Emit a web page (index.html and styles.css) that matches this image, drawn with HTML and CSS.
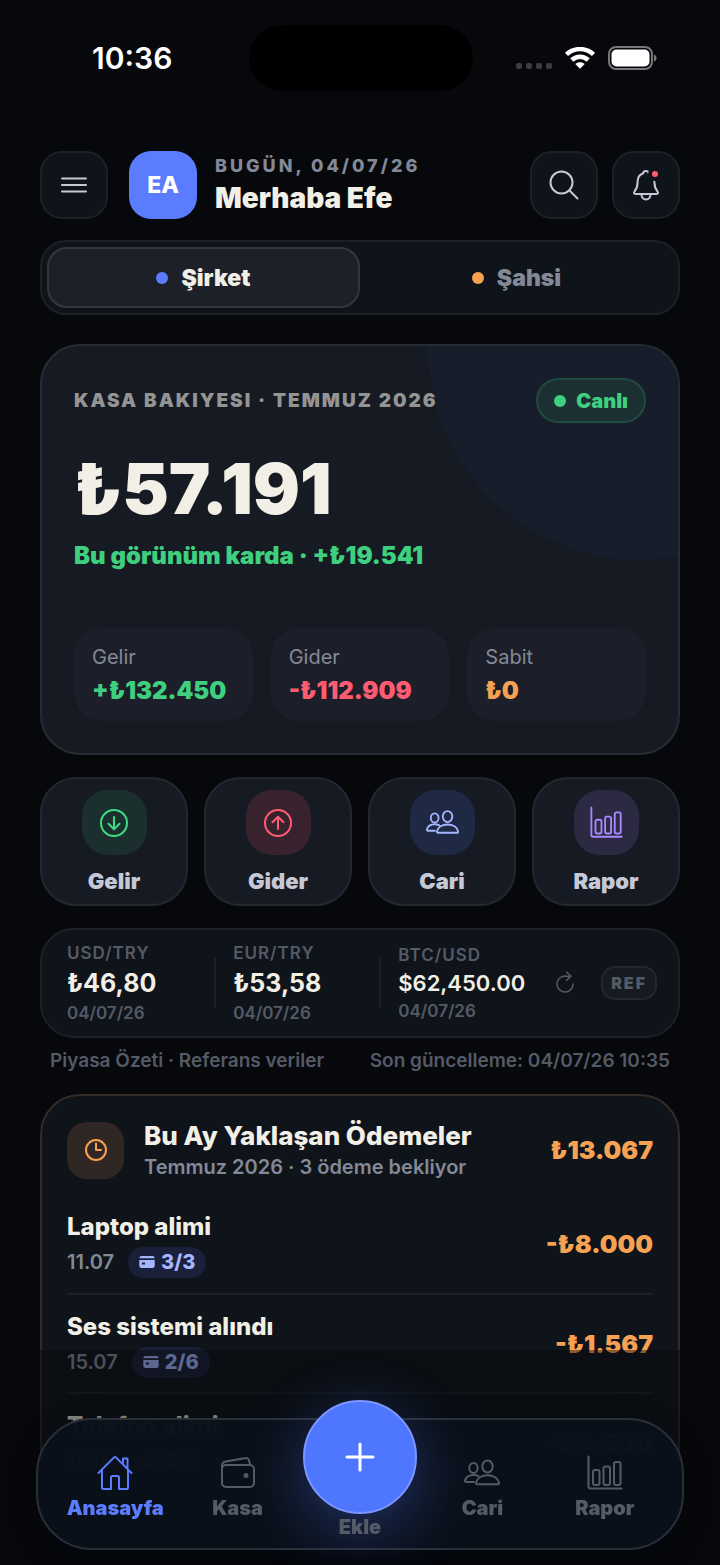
FILE: index.html
```html
<!DOCTYPE html>
<html lang="tr">
<head>
  <meta charset="UTF-8">
  <meta name="viewport" content="width=device-width, initial-scale=1.0">
  <title>Anasayfa</title>
  <link rel="stylesheet" href="styles.css">
</head>
<body>
  <!-- İkonlar -->
  <svg class="sprite" aria-hidden="true">
    <symbol id="icon-people" viewBox="0 0 36 36">
      <ellipse cx="23.500" cy="11.500" rx="5.200" ry="6"/>
      <path d="M13 29.200c-.8 0-1.200-.6-1-1.500 1-4.600 5.700-7.500 11.500-7.500S34 23.100 35 27.700c.2.9-.2 1.500-1 1.500z"/>
      <ellipse cx="9.500" cy="13" rx="4.200" ry="5"/>
      <path d="M9.800 27H2c-.7 0-1.100-.5-1-1.300.8-3.500 4.200-5.800 8.500-5.800 1.900 0 3.600.4 5 1.200"/>
    </symbol>
    <symbol id="icon-chart" viewBox="0 0 36 36">
      <path d="M1.500 1.500v30c0 1.600.4 2 2 2h31"/>
      <rect x="6" y="15" width="6.500" height="15" rx="2"/>
      <rect x="16.500" y="11.500" width="6.500" height="18.500" rx="2"/>
      <rect x="27" y="7" width="6.500" height="23" rx="2"/>
    </symbol>
    <symbol id="icon-card" viewBox="0 0 16 14">
      <path d="M2.500 1h11A2.200 2.200 0 0 1 15.700 3.200H.3A2.200 2.200 0 0 1 2.500 1z"/>
      <path fill-rule="evenodd" d="M.3 5h15.400v5.800a2.200 2.200 0 0 1-2.200 2.200h-11A2.200 2.200 0 0 1 .3 10.800zM3 7.500v2h3v-2z"/>
    </symbol>
  </svg>

  <div class="status-bar">
    <span class="status-time">10:36</span>
    <span class="island"></span>
    <span class="status-icons">
      <span class="signal"><i></i><i></i><i></i><i></i></span>
      <svg class="wifi" width="30" height="22" viewBox="0 0 30 22">
        <path d="M1.500 7.500C9 .3 21 .3 28.500 7.500"/>
        <path d="M6.800 13c4.700-4.400 11.700-4.400 16.400 0"/>
        <path class="solid" d="M15 21.800l-4.700-4.900c2.600-2.300 6.800-2.300 9.400 0z"/>
      </svg>
      <svg class="battery" width="50" height="24" viewBox="0 0 50 24">
        <rect class="shell" x="1" y="1" width="43" height="22" rx="7"/>
        <rect class="charge" x="3.500" y="3.500" width="38" height="17" rx="5"/>
        <path class="tip" d="M46 8.500c3.400 1 3.400 6 0 7z"/>
      </svg>
    </span>
  </div>

  <main class="page">
    <header class="header">
      <button class="icon-btn" type="button" aria-label="Menü">
        <svg width="28" height="28" viewBox="0 0 28 28"><path d="M2 7.500h24M2 14h24M2 20.500h24"/></svg>
      </button>
      <div class="avatar">EA</div>
      <div class="greeting">
        <p>BUGÜN, 04/07/26</p>
        <h1>Merhaba Efe</h1>
      </div>
      <button class="icon-btn" type="button" aria-label="Ara">
        <svg width="32" height="32" viewBox="0 0 32 32"><circle cx="13.500" cy="13.500" r="11"/><path d="M21.500 21.500l8 8"/></svg>
      </button>
      <button class="icon-btn" type="button" aria-label="Bildirimler">
        <svg width="32" height="32" viewBox="0 0 32 32">
          <path d="M5.500 25C4 25 3.500 23.800 4.500 22.500c2.300-2.800 3-4.500 3-8.500 0-5 1.500-8.500 5.500-9.500.4-1.800 1.500-2.500 3-2.500s2.600.7 3 2.500c4 1 5.500 4.500 5.500 9.500 0 4 .7 5.700 3 8.500 1 1.300.5 2.500-1 2.500z"/>
          <path d="M11.500 25.500c0 3 2 5 4.500 5s4.500-2 4.500-5"/>
        </svg>
        <span class="notify-dot"></span>
      </button>
    </header>

    <div class="switch">
      <button class="switch-item active" type="button"><span class="dot blue"></span>Şirket</button>
      <button class="switch-item" type="button"><span class="dot orange"></span>Şahsi</button>
    </div>

    <section class="balance">
      <div class="balance-head">
        <h2>KASA BAKIYESI · TEMMUZ 2026</h2>
        <span class="live"><span class="dot green"></span>Canlı</span>
      </div>
      <p class="balance-amount">₺57.191</p>
      <p class="balance-note">Bu görünüm karda · +₺19.541</p>
      <div class="stats">
        <div class="stat"><span>Gelir</span><strong class="text-green">+₺132.450</strong></div>
        <div class="stat"><span>Gider</span><strong class="text-red">-₺112.909</strong></div>
        <div class="stat"><span>Sabit</span><strong class="text-orange">₺0</strong></div>
      </div>
    </section>

    <div class="actions">
      <button class="action" type="button">
        <span class="action-icon green"><svg width="30" height="30" viewBox="0 0 30 30"><circle cx="15" cy="15" r="13"/><path d="M15 9v12M9.500 15.800l5.500 5.400 5.500-5.400"/></svg></span>
        Gelir
      </button>
      <button class="action" type="button">
        <span class="action-icon red"><svg width="30" height="30" viewBox="0 0 30 30"><circle cx="15" cy="15" r="13"/><path d="M15 21V9M9.500 14.200L15 8.800l5.500 5.400"/></svg></span>
        Gider
      </button>
      <button class="action" type="button">
        <span class="action-icon blue"><svg width="33" height="33"><use href="#icon-people"/></svg></span>
        Cari
      </button>
      <button class="action" type="button">
        <span class="action-icon purple"><svg width="33" height="33"><use href="#icon-chart"/></svg></span>
        Rapor
      </button>
    </div>

    <section class="market">
      <div class="quote"><span>USD/TRY</span><strong>₺46,80</strong><small>04/07/26</small></div>
      <div class="quote"><span>EUR/TRY</span><strong>₺53,58</strong><small>04/07/26</small></div>
      <div class="quote quote-btc"><span>BTC/USD</span><strong>$62,450.00</strong><small>04/07/26</small></div>
      <button class="refresh" type="button" aria-label="Yenile">
        <svg width="22" height="26" viewBox="0 0 22 26"><path d="M14.500 6.800A8 8 0 1 0 19 14M11 6.300h5.500M12.500 2l4.300 4.300L12.500 10.500"/></svg>
      </button>
      <span class="ref">REF</span>
    </section>
    <div class="market-note">
      <span>Piyasa Özeti · Referans veriler</span>
      <span>Son güncelleme: 04/07/26 10:35</span>
    </div>

    <section class="payments">
      <div class="payments-head">
        <span class="clock"><svg width="24" height="24" viewBox="0 0 24 24"><circle cx="12" cy="12" r="10"/><path d="M12 5.500V12h5"/></svg></span>
        <div class="payments-title">
          <h2>Bu Ay Yaklaşan Ödemeler</h2>
          <p>Temmuz 2026 · 3 ödeme bekliyor</p>
        </div>
        <strong class="amount">₺13.067</strong>
      </div>
      <ul class="payment-list">
        <li>
          <div>
            <h3>Laptop alimi</h3>
            <p>11.07 <span class="part"><svg width="16" height="14"><use href="#icon-card"/></svg>3/3</span></p>
          </div>
          <strong class="amount">-₺8.000</strong>
        </li>
        <li>
          <div>
            <h3>Ses sistemi alındı</h3>
            <p>15.07 <span class="part"><svg width="16" height="14"><use href="#icon-card"/></svg>2/6</span></p>
          </div>
          <strong class="amount">-₺1.567</strong>
        </li>
        <li>
          <div>
            <h3>Telefon alimi</h3>
            <p>15.07 <span class="part"><svg width="16" height="14"><use href="#icon-card"/></svg>3/6</span></p>
          </div>
          <strong class="amount">-₺3.500</strong>
        </li>
      </ul>
    </section>
  </main>

  <!-- Alt menü -->
  <div class="dock">
    <nav class="tabs">
      <a class="tab active" href="#anasayfa">
        <svg width="36" height="36" viewBox="0 0 36 36"><path d="M1.500 18L16.800 2.600c.8-.8 1.600-.8 2.400 0L34.500 18M5 15v17.500c0 1 .5 1.500 1.500 1.500h7.500V22.500c0-1 .5-1.500 1.500-1.500h5c1 0 1.500.5 1.500 1.500V34h7.500c1 0 1.500-.5 1.500-1.500V15M26 9V3.500h4.500V14"/></svg>
        Anasayfa
      </a>
      <a class="tab" href="#kasa">
        <svg width="36" height="36" viewBox="0 0 36 36"><rect x="2" y="10" width="32" height="22" rx="4"/><path d="M2 14.500V10.500c0-2.500 1-3.500 3.500-4L25 3.200c2.500-.4 4 .8 4.300 3L30 10"/><circle cx="26" cy="20.500" r="1.500" fill="currentColor"/></svg>
        Kasa
      </a>
      <a class="tab tab-add" href="#ekle">
        <span class="fab"><svg width="30" height="30" viewBox="0 0 30 30"><path d="M15 2v26M2 15h26"/></svg></span>
        Ekle
      </a>
      <a class="tab" href="#cari">
        <svg width="36" height="36"><use href="#icon-people"/></svg>
        Cari
      </a>
      <a class="tab" href="#rapor">
        <svg width="36" height="36"><use href="#icon-chart"/></svg>
        Rapor
      </a>
    </nav>
  </div>
</body>
</html>
```
FILE: styles.css
```css
* {
  box-sizing: border-box;
}
body {
  margin: 0;
  background-color: #06080c;
  color: #f2efe6;
  font-family: Inter, "Liberation Sans", sans-serif;
}
h1, h2, h3, p, ul {
  margin: 0;
  padding: 0;
}
button {
  font-family: inherit;
  cursor: pointer;
}
svg {
  display: block;
  fill: none;
  stroke: currentColor;
  stroke-width: 2;
  stroke-linecap: round;
  stroke-linejoin: round;
}
.sprite {
  position: absolute;
  width: 0;
  height: 0;
}

/* Durum çubuğu */
.status-bar {
  display: grid;
  grid-template-columns: 1fr 224px 1fr;
  align-items: center;
  height: 116px;
  padding: 0 62px 0 64px;
  color: #fff;
}
.status-time {
  padding-left: 28px;
  font-size: 30px;
  font-weight: 600;
}
.island {
  height: 66px;
  border-radius: 33px;
  background-color: #000;
}
.status-icons {
  display: flex;
  justify-content: flex-end;
  align-items: center;
  gap: 13px;
}
.signal {
  display: flex;
  gap: 4px;
  margin-top: 16px;
}
.signal i {
  width: 6px;
  height: 6px;
  border-radius: 2px;
  background-color: #3c3d41;
}
.wifi {
  stroke-width: 4.5;
  stroke-linecap: butt;
}
.wifi .solid {
  fill: currentColor;
  stroke: none;
}
.battery .shell {
  stroke: #77787b;
}
.battery .charge {
  fill: currentColor;
  stroke: none;
}
.battery .tip {
  fill: #77787b;
  stroke: none;
}

.page {
  padding: 35px 40px 48px;
}

/* Üst bölüm */
.header {
  display: flex;
  align-items: center;
  gap: 14px;
}
.icon-btn {
  position: relative;
  display: flex;
  justify-content: center;
  align-items: center;
  width: 68px;
  height: 68px;
  padding: 0;
  border: 2px solid #1d2127;
  border-radius: 22px;
  background-color: #0f141b;
  color: #c5c9d6;
}
.avatar {
  width: 68px;
  height: 68px;
  margin-left: 7px;
  border-radius: 22px;
  background-color: #5b7cff;
  color: #fff;
  font-size: 23px;
  font-weight: 800;
  line-height: 68px;
  text-align: center;
}
.greeting {
  flex: 1;
  padding-left: 4px;
}
.greeting p {
  color: #848997;
  font-size: 18px;
  font-weight: 800;
  line-height: 26px;
  letter-spacing: 3px;
}
.greeting h1 {
  font-size: 28px;
  font-weight: 900;
  line-height: 38px;
}
.notify-dot {
  position: absolute;
  top: 14px;
  right: 16px;
  width: 14px;
  height: 14px;
  border: 4px solid #0f141b;
  border-radius: 50%;
  background-color: #ff5c72;
}

.dot {
  width: 12px;
  height: 12px;
  border-radius: 50%;
}
.dot.blue {
  background-color: #5b7cff;
}
.dot.orange {
  background-color: #f7a152;
}
.dot.green {
  background-color: #3fd07f;
}
.text-green {
  color: #3fd07f;
}
.text-red {
  color: #ff5c72;
}
.text-orange {
  color: #f7a152;
}

.switch {
  display: flex;
  margin-top: 21px;
  padding: 5px;
  border: 2px solid #1d2127;
  border-radius: 26px;
  background-color: #0f141b;
}
.switch-item {
  flex: 1;
  display: flex;
  justify-content: center;
  align-items: center;
  gap: 13px;
  height: 61px;
  border: 2px solid transparent;
  border-radius: 20px;
  background: none;
  color: #848997;
  font-size: 23px;
  font-weight: 900;
}
.switch-item.active {
  border-color: #33373d;
  background-color: #1d2127;
  color: #f2efe6;
}

/* Kasa kartı */
.balance {
  position: relative;
  margin-top: 29px;
  padding: 32px;
  border: 2px solid #272b33;
  border-radius: 40px;
  background-color: #161a23;
  overflow: hidden;
}
.balance::before {
  content: "";
  position: absolute;
  top: -210px;
  right: -174px;
  width: 424px;
  height: 424px;
  border-radius: 50%;
  background-color: #171d2a;
}
.balance > * {
  position: relative;
}
.balance-head {
  display: flex;
  justify-content: space-between;
  align-items: center;
}
.balance-head h2 {
  color: #949494;
  font-size: 19px;
  font-weight: 900;
  letter-spacing: 2px;
}
.live {
  display: flex;
  align-items: center;
  gap: 10px;
  height: 45px;
  padding: 0 16px;
  border: 2px solid #214a40;
  border-radius: 23px;
  background-color: #1c2f33;
  color: #3fd07f;
  font-size: 20px;
  font-weight: 900;
}
.balance-amount {
  margin-top: 22px;
  font-size: 70px;
  font-weight: 900;
  line-height: 88px;
}
.balance-note {
  margin-top: 8px;
  color: #3fd07f;
  font-size: 24px;
  font-weight: 900;
  line-height: 30px;
}
.stats {
  display: grid;
  grid-template-columns: repeat(3, 1fr);
  gap: 18px;
  margin-top: 57px;
}
.stat {
  padding: 15px 18px 14px;
  border-radius: 28px;
  background-color: #1c1f29;
}
.stat span,
.stat strong {
  display: block;
}
.stat span {
  color: #848997;
  font-size: 20px;
  line-height: 28px;
}
.stat strong {
  margin-top: 4px;
  font-size: 24px;
  font-weight: 900;
  line-height: 32px;
}

/* Hızlı işlemler */
.actions {
  display: grid;
  grid-template-columns: repeat(4, 1fr);
  gap: 16px;
  margin-top: 22px;
}
.action {
  display: flex;
  flex-direction: column;
  align-items: center;
  gap: 12px;
  padding: 11px 0 9px;
  border: 2px solid #23272f;
  border-radius: 36px;
  background-color: #161a23;
  color: #c5c9d6;
  font-size: 22px;
  font-weight: 900;
  line-height: 28px;
}
.action-icon {
  display: flex;
  justify-content: center;
  align-items: center;
  width: 65px;
  height: 65px;
  border-radius: 26px;
}
.action-icon.green {
  background-color: #1b302e;
  color: #3edb80;
}
.action-icon.red {
  background-color: #37222d;
  color: #ff5c72;
}
.action-icon.blue {
  background-color: #1f2943;
  color: #a5b6ff;
}
.action-icon.purple {
  background-color: #2c2a42;
  color: #aa88ff;
}

/* Piyasa özeti */
.market {
  display: flex;
  align-items: center;
  margin-top: 22px;
  padding: 12px 21px 12px 25px;
  border: 2px solid #1d2127;
  border-radius: 34px;
  background-color: #0f141b;
}
.quote {
  position: relative;
  flex: 2 0 auto;
}
.quote + .quote {
  padding-left: 19px;
}
.quote + .quote::before {
  content: "";
  position: absolute;
  top: 50%;
  left: 0;
  width: 2px;
  height: 50px;
  margin-top: -25px;
  background-color: #1d2127;
}
.quote-btc {
  flex-grow: 1;
}
.quote span,
.quote strong,
.quote small {
  display: block;
}
.quote span {
  color: #555a67;
  font-size: 17px;
  font-weight: 600;
  line-height: 22px;
  letter-spacing: 1px;
}
.quote strong {
  font-size: 25px;
  font-weight: 700;
  line-height: 38px;
}
.quote small {
  color: #555a67;
  font-size: 17px;
  font-weight: 600;
  line-height: 22px;
}
.quote-btc strong {
  font-size: 22px;
  font-weight: 600;
  line-height: 34px;
}
.refresh {
  padding: 0;
  border: none;
  background: none;
  color: #555a67;
}
.refresh svg {
  stroke-width: 1.5;
}
.ref {
  margin-left: 25px;
  padding: 0 8px;
  border: 2px solid #23272f;
  border-radius: 14px;
  background-color: #161a21;
  color: #555a67;
  font-size: 16px;
  font-weight: 900;
  line-height: 30px;
  letter-spacing: 2px;
}
.market-note {
  display: flex;
  justify-content: space-between;
  margin-top: 10px;
  padding: 0 10px;
  color: #555a67;
  font-size: 19px;
  font-weight: 600;
  line-height: 26px;
}

/* Yaklaşan ödemeler */
.payments {
  margin-top: 20px;
  padding: 23px 25px 8px;
  border: 2px solid #342a26;
  border-radius: 40px;
  background-color: #0f141b;
}
.payments-head {
  display: flex;
  align-items: center;
  gap: 20px;
}
.clock {
  display: flex;
  justify-content: center;
  align-items: center;
  width: 57px;
  height: 57px;
  border-radius: 20px;
  background-color: #302724;
  color: #f7a152;
}
.payments-title {
  flex: 1;
}
.payments-title h2 {
  font-size: 26px;
  font-weight: 800;
  line-height: 34px;
}
.payments-title p {
  color: #848997;
  font-size: 20px;
  font-weight: 600;
  line-height: 28px;
}
.amount {
  color: #f7a152;
  font-size: 25px;
  font-weight: 900;
}
.payment-list {
  margin-top: 13px;
  list-style: none;
}
.payment-list li {
  display: flex;
  justify-content: space-between;
  align-items: center;
  height: 99px;
}
.payment-list li + li {
  border-top: 2px solid #1d2127;
}
.payment-list h3 {
  font-size: 24px;
  font-weight: 800;
  line-height: 34px;
}
.payment-list p {
  display: flex;
  align-items: center;
  gap: 14px;
  margin-top: 3px;
  color: #848997;
  font-size: 20px;
  font-weight: 600;
  line-height: 31px;
}
.part {
  display: flex;
  align-items: center;
  gap: 6px;
  padding: 0 11px;
  border-radius: 16px;
  background-color: #1a203a;
  color: #a5b6ff;
  font-weight: 800;
}
.part svg {
  fill: currentColor;
  stroke: none;
}

/* Alt menü */
.dock {
  position: fixed;
  right: 0;
  bottom: 0;
  left: 0;
  padding: 68px 36px 15px;
  background-color: rgba(6, 8, 12, 0.45);
}
.tabs {
  display: grid;
  grid-template-columns: repeat(5, 1fr);
  height: 132px;
  padding: 0 16px;
  border: 2px solid #2a303a;
  border-radius: 56px;
  background-color: rgba(10, 16, 26, 0.98);
  box-shadow: 0 8px 32px rgba(2, 5, 14, 0.3);
}
.tab {
  display: flex;
  flex-direction: column;
  align-items: center;
  gap: 3px;
  padding-top: 35px;
  color: #555a67;
  font-size: 20px;
  font-weight: 900;
  line-height: 28px;
  text-decoration: none;
}
.tab.active {
  color: #5b7cff;
}
.tab-add {
  gap: 0;
  margin-top: -20px;
  padding-top: 0;
  line-height: 26px;
}
.fab {
  display: flex;
  justify-content: center;
  align-items: center;
  width: 114px;
  height: 114px;
  border: 2px solid #7c96ff;
  border-radius: 50%;
  background-color: #4f76ff;
  box-shadow: 0 16px 64px rgba(79, 118, 255, 0.35);
  color: #fff;
}
.fab svg {
  stroke-width: 3;
}
```
